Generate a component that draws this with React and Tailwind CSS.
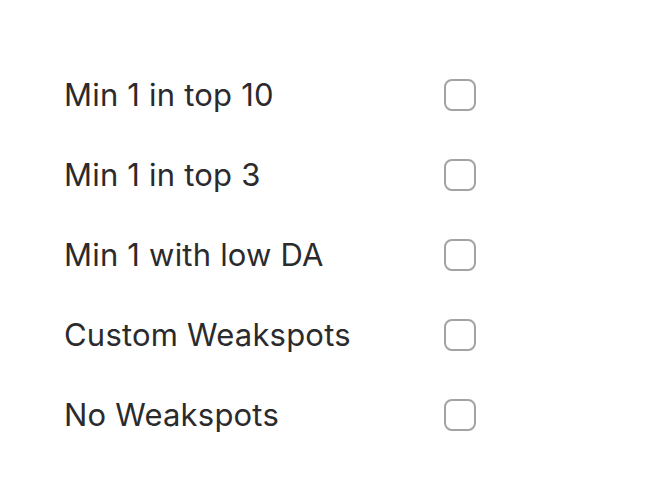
export default function App() {
  const items = ["Min 1 in top 10", "Min 1 in top 3", "Min 1 with low DA", "Custom Weakspots", "No Weakspots"];
  return (
    <div className="w-[648px] h-[500px] bg-white pt-[55px] pl-[64px]" style={{ fontFamily: "Inter, sans-serif" }}>
      {items.map((t) => (
        <div key={t} className="flex items-center h-[80px]">
          <span className="w-[380px] text-[31px] text-[#2b2b2d] tracking-[0.2px]">{t}</span>
          <span className="w-[32px] h-[32px] rounded-[8px] border-2 border-[#a3a3a3] bg-white" />
        </div>
      ))}
    </div>
  );
}
